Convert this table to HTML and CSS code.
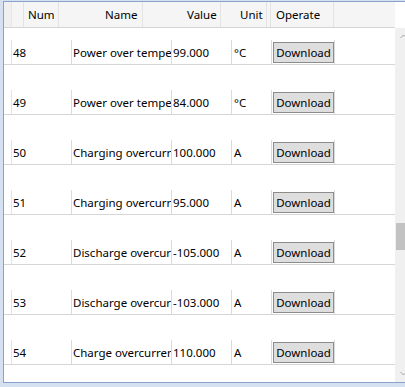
FILE: index.html
```html
<!DOCTYPE html>
<html>
<head>
<meta charset="utf-8">
<link rel="stylesheet" href="styles.css">
</head>
<body>
<div class="frame">
  <div class="grid">
    <div class="main">
      <div class="header">
        <div class="hcell corner"></div>
        <div class="hcell h-blank"></div>
        <div class="hcell h-num"><span>Num</span></div>
        <div class="hcell h-name"><span>Name</span></div>
        <div class="hcell h-value"><span>Value</span></div>
        <div class="hcell h-unit"><span>Unit</span></div>
        <div class="hcell h-gap"></div>
        <div class="hcell h-op"><span>Operate</span></div>
        <div class="hcell h-fill"></div>
      </div>
      <div class="body">
        <div class="rows">
          <div class="row"><div class="cells"><div class="rh"></div><div class="c c-num">48</div><div class="c c-name">Power over temperature</div><div class="c c-value">99.000</div><div class="c c-unit">°C</div><div class="c c-op"><button class="btn">Download</button></div></div></div>
          <div class="row"><div class="cells"><div class="rh"></div><div class="c c-num">49</div><div class="c c-name">Power over temperature</div><div class="c c-value">84.000</div><div class="c c-unit">°C</div><div class="c c-op"><button class="btn">Download</button></div></div></div>
          <div class="row"><div class="cells"><div class="rh"></div><div class="c c-num">50</div><div class="c c-name">Charging overcurrent</div><div class="c c-value">100.000</div><div class="c c-unit">A</div><div class="c c-op"><button class="btn">Download</button></div></div></div>
          <div class="row"><div class="cells"><div class="rh"></div><div class="c c-num">51</div><div class="c c-name">Charging overcurrent</div><div class="c c-value">95.000</div><div class="c c-unit">A</div><div class="c c-op"><button class="btn">Download</button></div></div></div>
          <div class="row"><div class="cells"><div class="rh"></div><div class="c c-num">52</div><div class="c c-name">Discharge overcurrent</div><div class="c c-value">-105.000</div><div class="c c-unit">A</div><div class="c c-op"><button class="btn">Download</button></div></div></div>
          <div class="row"><div class="cells"><div class="rh"></div><div class="c c-num">53</div><div class="c c-name">Discharge overcurrent</div><div class="c c-value">-103.000</div><div class="c c-unit">A</div><div class="c c-op"><button class="btn">Download</button></div></div></div>
          <div class="row"><div class="cells"><div class="rh"></div><div class="c c-num">54</div><div class="c c-name">Charge overcurrent</div><div class="c c-value">110.000</div><div class="c c-unit">A</div><div class="c c-op"><button class="btn">Download</button></div></div></div>
          <div class="row"><div class="cells"><div class="rh"></div><div class="c c-num">55</div><div class="c c-name">Charge overcurrent</div><div class="c c-value">105.000</div><div class="c c-unit">A</div><div class="c c-op"><button class="btn">Download</button></div></div></div>
        </div>
      </div>
    </div>
    <div class="vscroll">
      <div class="sb-top"></div>
      <div class="sb-track">
        <div class="arrow up"><svg width="17" height="17" viewBox="0 0 17 17"><path d="M5.5 10 L8.5 7 L11.5 10" fill="none" stroke="#a3a3a3" stroke-width="1"/></svg></div>
        <div class="sb-space top-space"></div>
        <div class="thumb"></div>
        <div class="sb-space"></div>
        <div class="arrow down"><svg width="17" height="17" viewBox="0 0 17 17"><path d="M5.5 7 L8.5 10 L11.5 7" fill="none" stroke="#a3a3a3" stroke-width="1"/></svg></div>
      </div>
    </div>
  </div>
</div>
</body>
</html>
```

FILE: styles.css
```css
html, body {
  margin: 0;
  padding: 0;
  background: #d5e1f0;
  overflow: hidden;
}

body {
  font-family: "Noto Sans", "Open Sans", sans-serif;
  font-size: 11.5px;
  color: #000;
}

.frame {
  width: 405px;
  height: 387px;
  padding: 1px 0 0 3px;
  box-sizing: border-box;
}

.grid {
  display: flex;
  width: 402px;
  height: 382px;
  border-top: 1px solid #87a3c9;
  border-left: 1px solid #87a3c9;
  border-bottom: 1px solid #87a3c9;
  box-sizing: border-box;
  background: #fff;
  overflow: hidden;
}

.main {
  width: 391px;
  flex: none;
  display: flex;
  flex-direction: column;
}

.header {
  display: flex;
  height: 25px;
  background: #f5f5f5;
  border-bottom: 1px solid #d5d5d5;
  flex: none;
}

.hcell {
  flex: none;
  height: 25px;
  border-right: 1px solid #e3e3e3;
  display: flex;
  align-items: center;
  white-space: nowrap;
}

.corner { width: 7px; border-right-color: #e6e6e6; background: #f0f0f0; }
.h-blank { width: 11px; }
.h-num { width: 34px; }
.h-num span { padding-left: 4px; }
.h-name { width: 83px; }
.h-name span { padding-left: 46px; }
.h-value { width: 77px; }
.h-value span { padding-left: 44px; }
.h-unit { width: 45px; }
.h-unit span { padding-left: 19px; }
.h-gap { width: 3px; }
.h-op { width: 62px; }
.h-op span { padding-left: 5px; }
.h-fill { flex: 1; border-right: none; }

.body {
  flex: 1;
  overflow: hidden;
}

.rows {
  margin-top: -13px;
}

.row {
  height: 49px;
  border-bottom: 1px solid #d6d6d6;
  display: flex;
  flex-direction: column;
  justify-content: flex-end;
}

.cells {
  display: flex;
  height: 24px;
}

.rh {
  width: 7px;
  flex: none;
  border-right: 1px solid #e2e2e2;
}

.c {
  flex: none;
  height: 24px;
  border-right: 1px solid #dadada;
  display: flex;
  align-items: center;
  white-space: nowrap;
  overflow: hidden;
  padding-left: 1px;
  box-sizing: border-box;
}

.c-num { width: 60px; }
.c-name { width: 100px; }
.c-value { width: 60px; }
.c-unit { width: 40px; padding-left: 2px; }
.c-op { width: 63px; }

.btn {
  font-family: inherit;
  font-size: 11.5px;
  color: #000;
  width: 61px;
  height: 21px;
  margin: 0;
  padding: 0;
  background: #dedede;
  border: 1px solid #8c8c8c;
  border-radius: 0;
  line-height: 17px;
}

.vscroll {
  width: 17px;
  flex: none;
  display: flex;
  flex-direction: column;
}

.sb-top {
  height: 25px;
  background: #fff;
  border-bottom: 1px solid #fff;
  flex: none;
}

.sb-track {
  flex: 1;
  background: #f0f0f0;
  display: flex;
  flex-direction: column;
}

.arrow {
  height: 17px;
  flex: none;
}

.arrow svg { display: block; }

.sb-space { flex: 1; }
.top-space { flex: none; height: 178px; }

.thumb {
  height: 27px;
  margin: 0 1px;
  background: #c2c2c2;
  flex: none;
}
```
